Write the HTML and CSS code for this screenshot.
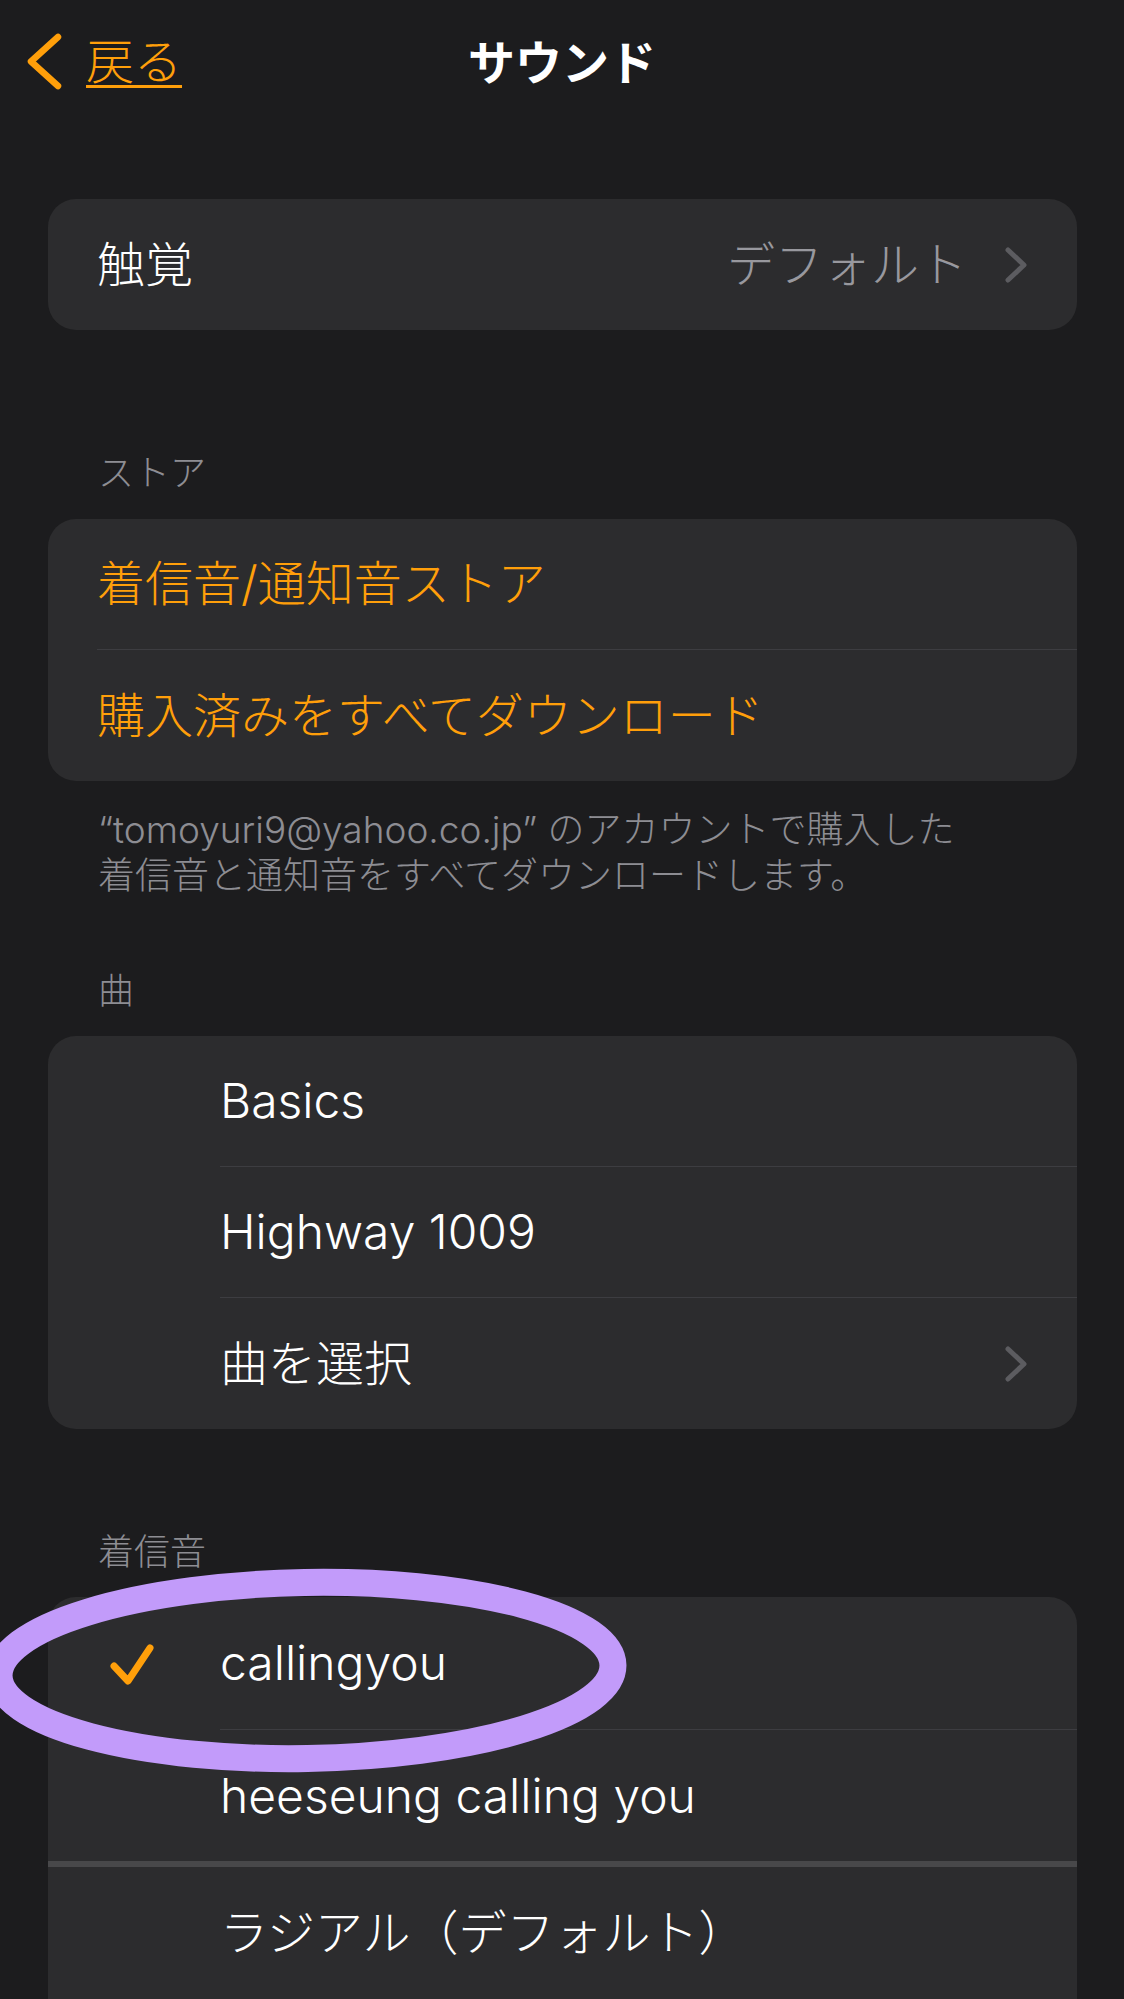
FILE: index.html
```html
<!DOCTYPE html>
<html lang="ja">
<head>
<meta charset="utf-8">
<title>サウンド</title>
<link rel="stylesheet" href="styles.css">
</head>
<body>
<div class="screen">
  <header class="nav">
    <a class="back">
      <svg class="back-chevron" viewBox="0 0 40 62"><path d="M34 6 L7 30.5 L34 55"/></svg>
      <span class="back-label">戻る</span>
    </a>
    <h1 class="title">サウンド</h1>
    <span class="nav-spacer"></span>
  </header>

  <main class="content">
    <section class="card card-first">
      <div class="row">
        <div class="cell">
          <span class="label">触覚</span>
          <span class="value">デフォルト</span>
          <svg class="disclosure" viewBox="0 0 22 36"><path d="M3 3 L19 18 L3 33"/></svg>
        </div>
      </div>
    </section>

    <h2 class="section-header header-store">ストア</h2>
    <section class="card">
      <div class="row">
        <div class="cell accent">着信音/通知音ストア</div>
      </div>
      <div class="row">
        <div class="cell accent">購入済みをすべてダウンロード</div>
      </div>
    </section>
    <p class="section-footer">“tomoyuri9@yahoo.co.jp” のアカウントで購入した<br>着信音と通知音をすべてダウンロードします。</p>

    <h2 class="section-header header-songs">曲</h2>
    <section class="card">
      <div class="row inset">
        <div class="gutter"></div>
        <div class="cell">Basics</div>
      </div>
      <div class="row inset">
        <div class="gutter"></div>
        <div class="cell">Highway 1009</div>
      </div>
      <div class="row inset">
        <div class="gutter"></div>
        <div class="cell">
          <span class="label">曲を選択</span>
          <svg class="disclosure push" viewBox="0 0 22 36"><path d="M3 3 L19 18 L3 33"/></svg>
        </div>
      </div>
    </section>

    <h2 class="section-header header-ringtones">着信音</h2>
    <section class="card card-last">
      <div class="row inset row-first">
        <div class="gutter">
          <svg class="check" viewBox="0 0 52 50"><path d="M10 27 L24 42 L46 9"/></svg>
        </div>
        <div class="cell">callingyou</div>
      </div>
      <div class="row inset">
        <div class="gutter"></div>
        <div class="cell">heeseung calling you</div>
      </div>
      <div class="thick-sep"></div>
      <div class="row inset">
        <div class="gutter"></div>
        <div class="cell">ラジアル（デフォルト）</div>
      </div>
    </section>
  </main>

  <svg class="annotation" viewBox="0 0 700 250">
    <ellipse cx="336" cy="120.5" rx="307" ry="88" transform="rotate(-1 336 120.5)"/>
  </svg>
</div>
</body>
</html>
```

FILE: styles.css
```css
* {
  box-sizing: border-box;
  margin: 0;
  padding: 0;
}

html,
body {
  background: #1c1c1e;
}

body {
  font-family: Inter, "Noto Sans CJK JP", sans-serif;
  font-weight: 300;
  color: #ffffff;
  -webkit-font-smoothing: antialiased;
}

.screen {
  position: relative;
  width: 1124px;
  height: 1999px;
  overflow: hidden;
}

/* Navigation bar */
.nav {
  display: grid;
  grid-template-columns: 1fr auto 1fr;
  align-items: center;
  height: 124px;
}

.back {
  display: flex;
  align-items: center;
  gap: 22px;
  padding-left: 24px;
  color: #ff9f0a;
  text-decoration: none;
}

.back-chevron {
  width: 40px;
  height: 62px;
  fill: none;
  stroke: #ff9f0a;
  stroke-width: 6.5;
  stroke-linecap: round;
  stroke-linejoin: round;
}

.back-label {
  font-size: 48px;
  line-height: 1;
  text-decoration: underline;
  text-decoration-thickness: 3px;
  text-underline-offset: 6px;
}

.title {
  font-size: 47px;
  font-weight: 700;
  line-height: 1;
  color: #ffffff;
}

/* Content */
.content {
  padding: 0 47px 0 48px;
}

.card {
  background: #2c2c2e;
  border-radius: 28px;
  overflow: hidden;
}

.card-first {
  margin-top: 75px;
}

.card-last {
  padding-bottom: 60px;
}

.row {
  display: flex;
  height: 131px;
  padding-left: 49px;
}

.row.inset {
  padding-left: 0;
}

.row-first {
  height: 133px;
}

.gutter {
  flex: none;
  width: 172px;
  display: flex;
  align-items: center;
}

.cell {
  flex: 1;
  display: flex;
  align-items: center;
  padding-right: 50px;
  font-size: 48px;
  line-height: 1.2;
  border-bottom: 1px solid #3d3d41;
}

.row:last-child .cell {
  border-bottom: none;
}

.row-first + .row .cell {
  border-bottom: none;
}

.cell.accent {
  color: #ff9f0a;
}

.value {
  margin-left: auto;
  color: #98989e;
}

.disclosure {
  flex: none;
  width: 22px;
  height: 36px;
  margin-left: 38px;
  fill: none;
  stroke: #5c5c60;
  stroke-width: 5;
  stroke-linecap: round;
  stroke-linejoin: round;
}

.disclosure.push {
  margin-left: auto;
}

.check {
  width: 52px;
  height: 50px;
  margin-left: 56px;
  fill: none;
  stroke: #ff9f0a;
  stroke-width: 7;
  stroke-linecap: round;
  stroke-linejoin: round;
}

.thick-sep {
  height: 6px;
  background: #48484a;
}

/* Section headers & footers */
.section-header {
  font-size: 36px;
  font-weight: 300;
  line-height: 46px;
  color: #8d8d93;
  padding-left: 50px;
  margin-bottom: 23px;
}

.header-store {
  margin-top: 120px;
}

.header-songs {
  margin-top: 69px;
  margin-bottom: 22px;
}

.header-ringtones {
  margin-top: 100px;
  margin-bottom: 22px;
}

.section-footer {
  font-size: 37px;
  line-height: 46px;
  color: #8d8d93;
  padding-left: 50px;
  margin-top: 26px;
}

/* Hand-drawn highlight annotation */
.annotation {
  position: absolute;
  left: -30px;
  top: 1550px;
  width: 700px;
  height: 250px;
  pointer-events: none;
}

.annotation ellipse {
  fill: none;
  stroke: #c29bfa;
  stroke-width: 27;
}
```
